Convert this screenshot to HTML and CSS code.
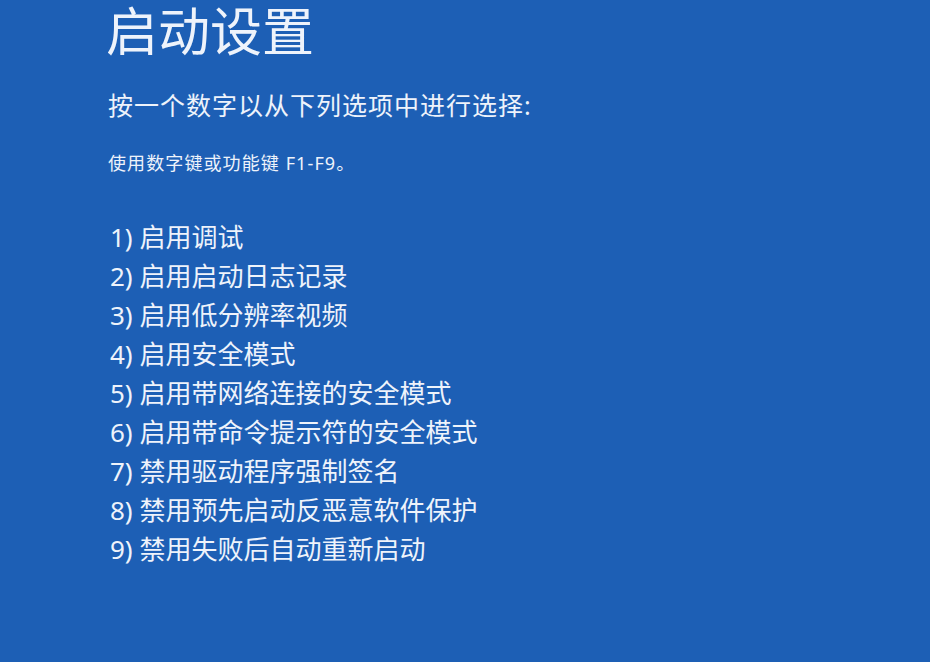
FILE: index.html
```html
<!DOCTYPE html>
<html lang="zh-CN">
<head>
<meta charset="utf-8">
<link rel="stylesheet" href="styles.css">
</head>
<body>
<main class="screen">
  <h1 class="title">启动设置</h1>
  <p class="subtitle">按一个数字以从下列选项中进行选择:</p>
  <p class="hint">使用数字键或功能键 F1-F9。</p>
  <ol class="options">
    <li>1) 启用调试</li>
    <li>2) 启用启动日志记录</li>
    <li>3) 启用低分辨率视频</li>
    <li>4) 启用安全模式</li>
    <li>5) 启用带网络连接的安全模式</li>
    <li>6) 启用带命令提示符的安全模式</li>
    <li>7) 禁用驱动程序强制签名</li>
    <li>8) 禁用预先启动反恶意软件保护</li>
    <li>9) 禁用失败后自动重新启动</li>
  </ol>
</main>
</body>
</html>
```

FILE: styles.css
```css
html, body {
  margin: 0;
  padding: 0;
  height: 100%;
  background: #1d5fb5;
}
body {
  font-family: "Noto Sans", "Noto Sans CJK SC", sans-serif;
  color: #eef3fb;
}
.screen {
  padding: 0 0 0 106px;
}
.title {
  margin: 0;
  font-size: 52px;
  line-height: 62px;
  font-weight: 400;
}
.subtitle {
  margin: 31px 0 0 2px;
  font-size: 25px;
  line-height: 25px;
  letter-spacing: 1px;
}
.hint {
  margin: 36px 0 0 2px;
  font-size: 18px;
  line-height: 18px;
  letter-spacing: 1.1px;
}
.options {
  list-style: none;
  margin: 46px 0 0 4px;
  padding: 0;
  font-size: 26px;
  line-height: 39px;
  letter-spacing: 0;
}
```
